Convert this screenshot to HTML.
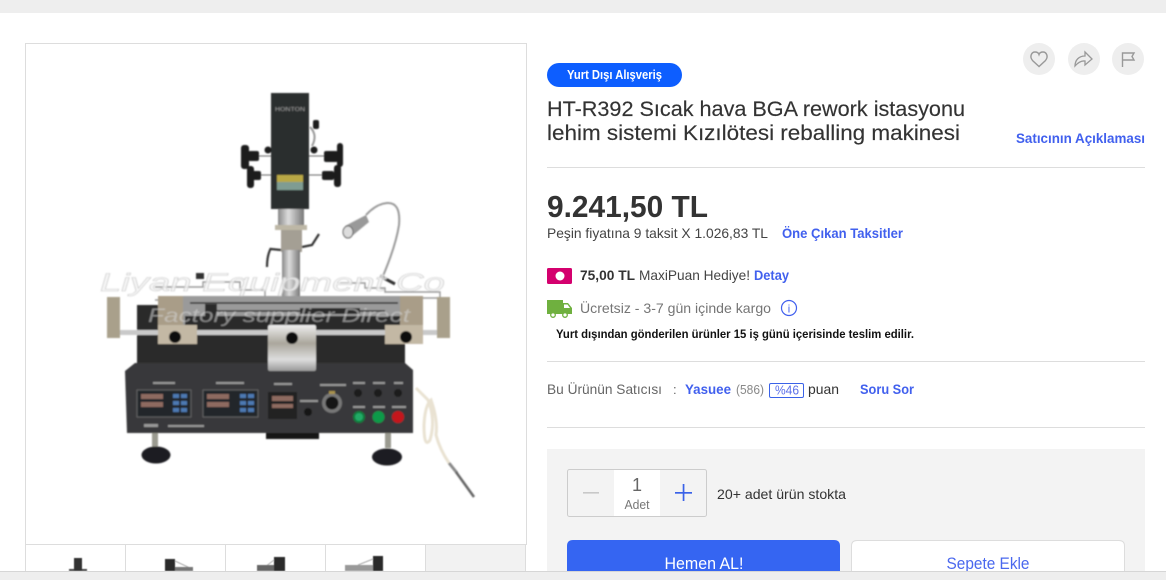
<!DOCTYPE html>
<html lang="tr"><head><meta charset="utf-8"><title>HT-R392</title>
<style>html,body{margin:0;padding:0;background:#fff;width:1166px;height:580px;overflow:hidden}svg{display:block}
text{font-family:"Liberation Sans",sans-serif}</style></head><body>
<svg width="1166" height="580" viewBox="0 0 1166 580" xmlns="http://www.w3.org/2000/svg">
<defs>
<filter id="b" x="-5%" y="-5%" width="110%" height="110%"><feGaussianBlur stdDeviation="0.8"/></filter>
<filter id="c" x="-5%" y="-20%" width="110%" height="140%"><feGaussianBlur stdDeviation="0.6"/></filter>
<linearGradient id="sil" x1="0" x2="1" y1="0" y2="0"><stop offset="0" stop-color="#888"/><stop offset=".4" stop-color="#ddd"/><stop offset=".7" stop-color="#aaa"/><stop offset="1" stop-color="#777"/></linearGradient>
<linearGradient id="sil2" x1="0" x2="0" y1="0" y2="1"><stop offset="0" stop-color="#eee"/><stop offset=".4" stop-color="#aaa69c"/><stop offset=".75" stop-color="#ddd"/><stop offset="1" stop-color="#999"/></linearGradient>
</defs>
<rect x="0" y="0" width="1166" height="13" fill="#eeeeee"/>
<rect x="25.500" y="43.500" width="501" height="501" fill="#fff" stroke="#ddd"/>

<g filter="url(#b)">
<!-- top head -->
<rect x="271" y="93" width="38" height="116" fill="#2b2f2f"/>
<text x="275" y="111" font-size="5" fill="#999" textLength="30" lengthAdjust="spacingAndGlyphs">HONTON</text>
<rect x="277" y="175" width="26" height="8" fill="#b9a845"/><rect x="277" y="182" width="26" height="8" fill="#7f9c92"/>
<!-- knobs -->
<g stroke="#666" stroke-width="1"><path d="M258 156H271M258 175H271M309 156H326M309 175H325"/></g>
<g fill="#1c1f1f">
<rect x="241" y="145" width="8" height="24" rx="3"/><rect x="248" y="151" width="11" height="10" rx="2"/><circle cx="268" cy="150" r="3.500"/>
<rect x="247" y="166" width="7" height="22" rx="3"/><rect x="252" y="171" width="9" height="9" rx="2"/>
<rect x="324" y="151" width="14" height="11" rx="2"/><rect x="337" y="143" width="6" height="24" rx="3"/>
<rect x="322" y="171" width="12" height="9" rx="2"/><rect x="334" y="165" width="7" height="22" rx="3"/>
<rect x="313" y="120" width="6" height="9" rx="2"/><circle cx="314" cy="150" r="3.500"/>
</g>
<path d="M310 127Q318 135 312 146" fill="none" stroke="#999" stroke-width="2"/>
<!-- column -->
<rect x="278" y="209" width="26" height="17" fill="url(#sil)"/>
<rect x="275" y="225" width="32" height="5" fill="#bdb7a6"/>
<rect x="281" y="230" width="21" height="22" fill="#a49f94"/>
<rect x="282" y="250" width="18" height="52" fill="url(#sil)"/>
<path d="M271 249L281 250M271 248Q267 255 267 267" stroke="#333" stroke-width="2.200" fill="none"/>
<path d="M302 247L312 245L319 234" stroke="#333" stroke-width="2.200" fill="none"/>
<!-- lamp -->
<path d="M383 276Q396 245 399 225Q401 202 387 203Q376 204 366 215" fill="none" stroke="#9a9a9a" stroke-width="2"/>
<path d="M366 215L345 226L352 236L369 222Z" fill="#999"/><ellipse cx="348" cy="232" rx="5" ry="6" fill="#ddd" stroke="#666"/>
<!-- upper frame -->
<g stroke="#999" stroke-width="1.400" fill="none">
<path d="M155 287H203V282H240V290H265V297H190M155 300H250V313"/>
<path d="M340 283H365V288H385V292H440V298H395V304H335V297H320"/>
</g>
<rect x="196" y="273" width="8" height="6" fill="#333"/><path d="M380 276L395 284" stroke="#333" stroke-width="3"/>
<!-- body -->
<rect x="137" y="305" width="268" height="60" fill="#2a2b2c"/>
<rect x="183" y="296" width="217" height="29" fill="#9a9a9a"/>
<g stroke="#2a2a2a" stroke-width="1.400"><path d="M190 303H398M215 311H385"/></g>
<g fill="#2a2a2a"><rect x="185" y="316" width="215" height="9"/><rect x="300" y="308" width="60" height="6"/><rect x="205" y="304" width="12" height="12"/></g>
<path d="M125 371L135 363H405L413 370V433H127Z" fill="#38393b"/>
<!-- side bars -->
<rect x="120" y="330" width="318" height="5" fill="#c9c9c9"/>
<rect x="107" y="297" width="13" height="41" fill="#a9a08b"/><rect x="437" y="297" width="13" height="41" fill="#a9a08b"/>
<rect x="158" y="296" width="25" height="30" fill="#a99d88"/><rect x="158" y="325" width="39" height="19" fill="#c3b8a4"/>
<rect x="400" y="296" width="23" height="30" fill="#a99d88"/><rect x="385" y="325" width="38" height="19" fill="#c3b8a4"/>
<rect x="268" y="325" width="48" height="46" rx="2" fill="url(#sil2)"/>
<circle cx="175" cy="337" r="6" fill="#111"/><circle cx="292" cy="338" r="6" fill="#111"/><circle cx="406" cy="337" r="6" fill="#111"/>
<!-- panels -->
<rect x="137" y="390" width="54" height="27" fill="#24262a" stroke="#777" stroke-width=".7"/>
<rect x="203" y="390" width="55" height="27" fill="#24262a" stroke="#777" stroke-width=".7"/>
<rect x="268" y="392" width="29" height="27" fill="#222"/>
<g fill="#8e6a60"><rect x="141" y="394" width="22" height="5"/><rect x="141" y="402" width="22" height="5"/><rect x="207" y="394" width="22" height="5"/><rect x="207" y="402" width="22" height="5"/><rect x="272" y="396" width="21" height="5"/><rect x="272" y="404" width="21" height="4"/></g>
<g fill="#4d79b2"><rect x="173" y="394" width="6" height="4"/><rect x="181" y="394" width="6" height="4"/><rect x="173" y="401" width="6" height="4"/><rect x="181" y="401" width="6" height="4"/><rect x="173" y="408" width="6" height="4"/><rect x="181" y="408" width="6" height="4"/><rect x="240" y="394" width="6" height="4"/><rect x="248" y="394" width="6" height="4"/><rect x="240" y="401" width="6" height="4"/><rect x="248" y="401" width="6" height="4"/><rect x="240" y="408" width="6" height="4"/><rect x="248" y="408" width="6" height="4"/></g>
<g fill="#999"><rect x="153" y="382" width="22" height="2"/><rect x="216" y="382" width="28" height="2"/><rect x="274" y="383" width="18" height="2"/><rect x="320" y="384" width="26" height="2"/><rect x="353" y="382" width="12" height="2"/><rect x="373" y="382" width="12" height="2"/><rect x="394" y="382" width="9" height="2"/><rect x="300" y="400" width="18" height="2"/><rect x="353" y="406" width="12" height="2"/><rect x="373" y="406" width="12" height="2"/><rect x="392" y="406" width="14" height="2"/><rect x="144" y="424" width="14" height="3"/><rect x="168" y="425" width="36" height="2"/></g>
<circle cx="308" cy="412" r="4" fill="#181818"/>
<circle cx="332" cy="403" r="10" fill="#777"/><circle cx="332" cy="403" r="6.500" fill="#161616"/><rect x="329" y="391" width="6" height="3" fill="#a8924c"/>
<circle cx="358" cy="393" r="4" fill="#1c1c1c"/><circle cx="378" cy="393" r="4" fill="#1c1c1c"/><circle cx="398" cy="393" r="4" fill="#1c1c1c"/>
<circle cx="359" cy="417" r="5" fill="#2a6" stroke="#097a3c" stroke-width="2"/><circle cx="378.500" cy="417" r="6" fill="#0c9a48"/><circle cx="398" cy="417" r="6" fill="#c4161c"/>
<!-- bottom -->
<rect x="266" y="433" width="53" height="6" fill="#191919"/>
<rect x="152" y="433" width="6" height="14" fill="#9a9a90"/><rect x="385" y="433" width="6" height="15" fill="#9a9a90"/>
<ellipse cx="156" cy="455" rx="14.500" ry="8.500" fill="#1e1e20"/>
<ellipse cx="387" cy="457" rx="15" ry="8.500" fill="#1e1e20"/>
<!-- cable -->
<path d="M416 388L428 400Q436 420 430 440Q424 449 424 425Q425 405 431 400Q438 420 436 435Q440 450 449 463" fill="none" stroke="#e9e2d2" stroke-width="3"/>
<path d="M449 463L457 473" stroke="#888" stroke-width="3"/><path d="M456 472L474 497" stroke="#666" stroke-width="2.600"/>
<!-- watermark -->
<text x="100" y="291" font-size="25" font-style="italic" fill="#f4f4f4" fill-opacity=".8" stroke="#c9c9c9" stroke-width=".5" textLength="345" lengthAdjust="spacingAndGlyphs">Liyan Equipment Co</text>
<text x="148" y="322" font-size="19" font-style="italic" fill="#d5d5d5" fill-opacity=".55" textLength="262" lengthAdjust="spacingAndGlyphs">Factory supplier Direct</text>
</g>

<!-- thumbs -->
<path d="M125.500 571V544.500H525.500V571M225.500 544.500V571M325.500 544.500V571M425.500 544.500V571" fill="none" stroke="#ddd"/>
<rect x="426" y="545" width="99" height="27" fill="#f2f2f2"/>
<rect x="25" y="544" width="1" height="27" fill="#ddd"/>
<g filter="url(#c)">
<rect x="74" y="558" width="8" height="13" fill="#333"/><path d="M69 570H74M82 570H87" stroke="#444" stroke-width="2"/>
<rect x="165" y="559" width="10" height="12" fill="#2c2c2c"/><path d="M175 561L190 568" stroke="#aaa"/><rect x="175" y="567" width="18" height="4" fill="#777"/>
<rect x="274" y="557" width="11" height="14" fill="#2c2c2c"/><path d="M274 560L265 567" stroke="#aaa"/><rect x="257" y="565" width="17" height="6" fill="#666"/>
<rect x="373" y="556" width="10" height="15" fill="#2c2c2c"/><path d="M373 559L358 565" stroke="#aaa"/><rect x="345" y="565" width="28" height="6" fill="#999"/>
</g>

<!-- top right icons -->
<circle cx="1039" cy="59" r="16" fill="#eeeeee"/><circle cx="1084" cy="59" r="16" fill="#eeeeee"/><circle cx="1128" cy="59" r="16" fill="#eeeeee"/>
<path d="M1039 66.500L1032.500 60.500C1029 56 1032 52 1035 52C1037 52 1038.500 53 1039 54.500C1039.500 53 1041 52 1043 52C1046 52 1049 56 1045.500 60.500Z" fill="none" stroke="#999" stroke-width="1.400"/>
<path d="M1075 66C1075 60 1079 56 1085 56V52L1092 59L1085 65V61C1081 60.500 1078 62.500 1075 66Z" fill="none" stroke="#999" stroke-width="1.300"/>
<path d="M1122.500 67V53H1134L1132 56.500L1134 60H1123" fill="none" stroke="#999" stroke-width="1.400"/>

<!-- pill & title -->
<rect x="547" y="63" width="135" height="24" rx="12" fill="#0d5eff"/>
<text x="567" y="79" font-size="12.500" font-weight="700" fill="#fff" textLength="95" lengthAdjust="spacingAndGlyphs">Yurt Dışı Alışveriş</text>
<text x="547" y="116" font-size="21.500" fill="#333" stroke="#333" stroke-width=".15" textLength="418" lengthAdjust="spacingAndGlyphs">HT-R392 Sıcak hava BGA rework istasyonu</text>
<text x="547" y="140" font-size="21.500" fill="#333" stroke="#333" stroke-width=".15" textLength="413" lengthAdjust="spacingAndGlyphs">lehim sistemi Kızılötesi reballing makinesi</text>
<text x="1016" y="143" font-size="14" font-weight="700" fill="#4160ee" textLength="129" lengthAdjust="spacingAndGlyphs">Satıcının Açıklaması</text>
<rect x="547" y="167" width="598" height="1" fill="#ddd"/>

<!-- price -->
<text x="547" y="217" font-size="31" font-weight="700" fill="#333" textLength="161" lengthAdjust="spacingAndGlyphs">9.241,50 TL</text>
<text x="547" y="238" font-size="14" fill="#444" textLength="221" lengthAdjust="spacingAndGlyphs">Peşin fiyatına 9 taksit X 1.026,83 TL</text>
<text x="782" y="238" font-size="14" font-weight="700" fill="#4160ee" textLength="121" lengthAdjust="spacingAndGlyphs">Öne Çıkan Taksitler</text>

<!-- maxipuan -->
<rect x="547" y="268" width="25" height="16" rx="1.500" fill="#d4006e"/><circle cx="560" cy="276" r="4.500" fill="#fff"/>
<text x="580" y="280" font-size="14" font-weight="700" fill="#333" textLength="55" lengthAdjust="spacingAndGlyphs">75,00 TL</text>
<text x="639" y="280" font-size="14" fill="#444" textLength="111" lengthAdjust="spacingAndGlyphs">MaxiPuan Hediye!</text>
<text x="754" y="280" font-size="14" font-weight="700" fill="#4160ee" textLength="35" lengthAdjust="spacingAndGlyphs">Detay</text>

<!-- cargo -->
<path d="M547 300H563V303H568L572 308V314H547Z" fill="#6fb03f"/><path d="M564 304.500H567.500L570 308H564Z" fill="#fff"/>
<circle cx="553" cy="315" r="2.300" fill="#fff" stroke="#6fb03f" stroke-width="1.300"/><circle cx="565" cy="315" r="2.300" fill="#fff" stroke="#6fb03f" stroke-width="1.300"/>
<text x="580" y="313" font-size="14" fill="#757575" textLength="191" lengthAdjust="spacingAndGlyphs">Ücretsiz - 3-7 gün içinde kargo</text>
<circle cx="789" cy="308" r="7.500" fill="none" stroke="#4160ee" stroke-width="1.200"/>
<text x="789" y="312.500" font-size="11" fill="#4160ee" text-anchor="middle">i</text>
<text x="556" y="338" font-size="12" font-weight="700" fill="#111" textLength="358" lengthAdjust="spacingAndGlyphs">Yurt dışından gönderilen ürünler 15 iş günü içerisinde teslim edilir.</text>
<rect x="547" y="361" width="598" height="1" fill="#ddd"/>

<!-- seller -->
<text x="547" y="394" font-size="14" fill="#666" textLength="115" lengthAdjust="spacingAndGlyphs">Bu Ürünün Satıcısı</text>
<text x="673" y="394" font-size="13" fill="#666">:</text>
<text x="685" y="394" font-size="14" font-weight="700" fill="#4160ee" textLength="46" lengthAdjust="spacingAndGlyphs">Yasuee</text>
<text x="736" y="394" font-size="13" fill="#888" textLength="28" lengthAdjust="spacingAndGlyphs">(586)</text>
<rect x="769.500" y="383.500" width="34" height="14" rx="1.500" fill="#fff" stroke="#3a62e8"/>
<text x="775" y="394.500" font-size="13" fill="#5a6ee8" textLength="24" lengthAdjust="spacingAndGlyphs">%46</text>
<text x="808" y="394" font-size="14" fill="#333" textLength="31" lengthAdjust="spacingAndGlyphs">puan</text>
<text x="860" y="394" font-size="14" font-weight="700" fill="#4160ee" textLength="54" lengthAdjust="spacingAndGlyphs">Soru Sor</text>
<rect x="547" y="427" width="598" height="1" fill="#ddd"/>

<!-- buy box -->
<rect x="547" y="449" width="598" height="123" fill="#f3f3f3"/>
<rect x="567.500" y="469.500" width="139" height="47" rx="2" fill="#f3f3f3" stroke="#ccc"/>
<rect x="614" y="470" width="46" height="46" fill="#fff"/>
<rect x="583" y="492" width="16" height="1.600" fill="#c8c8c8"/>
<rect x="675" y="492" width="17" height="1.700" fill="#3a62e8"/><rect x="682.700" y="484" width="1.700" height="17" fill="#3a62e8"/>
<text x="637" y="491" font-size="18" fill="#666" text-anchor="middle">1</text>
<text x="637" y="509" font-size="13" fill="#777" text-anchor="middle" textLength="25" lengthAdjust="spacingAndGlyphs">Adet</text>
<text x="717" y="499" font-size="14" fill="#333" textLength="129" lengthAdjust="spacingAndGlyphs">20+ adet ürün stokta</text>
<path d="M567 572V546Q567 540 573 540H834Q840 540 840 546V572Z" fill="#3565f2"/>
<path d="M851.500 572V546Q851.500 540.500 857 540.500H1119Q1124.500 540.500 1124.500 546V572Z" fill="#fff" stroke="#ddd"/>
<text x="704" y="569" font-size="17" fill="#fff" text-anchor="middle" textLength="79" lengthAdjust="spacingAndGlyphs">Hemen AL!</text>
<text x="988" y="569" font-size="17" fill="#4a68ee" text-anchor="middle" textLength="83" lengthAdjust="spacingAndGlyphs">Sepete Ekle</text>

<!-- bottom bar -->
<rect x="0" y="571" width="1166" height="9" fill="#eeeeee"/><rect x="0" y="571" width="1166" height="1" fill="#d6d6d6"/>
</svg>
</body></html>
